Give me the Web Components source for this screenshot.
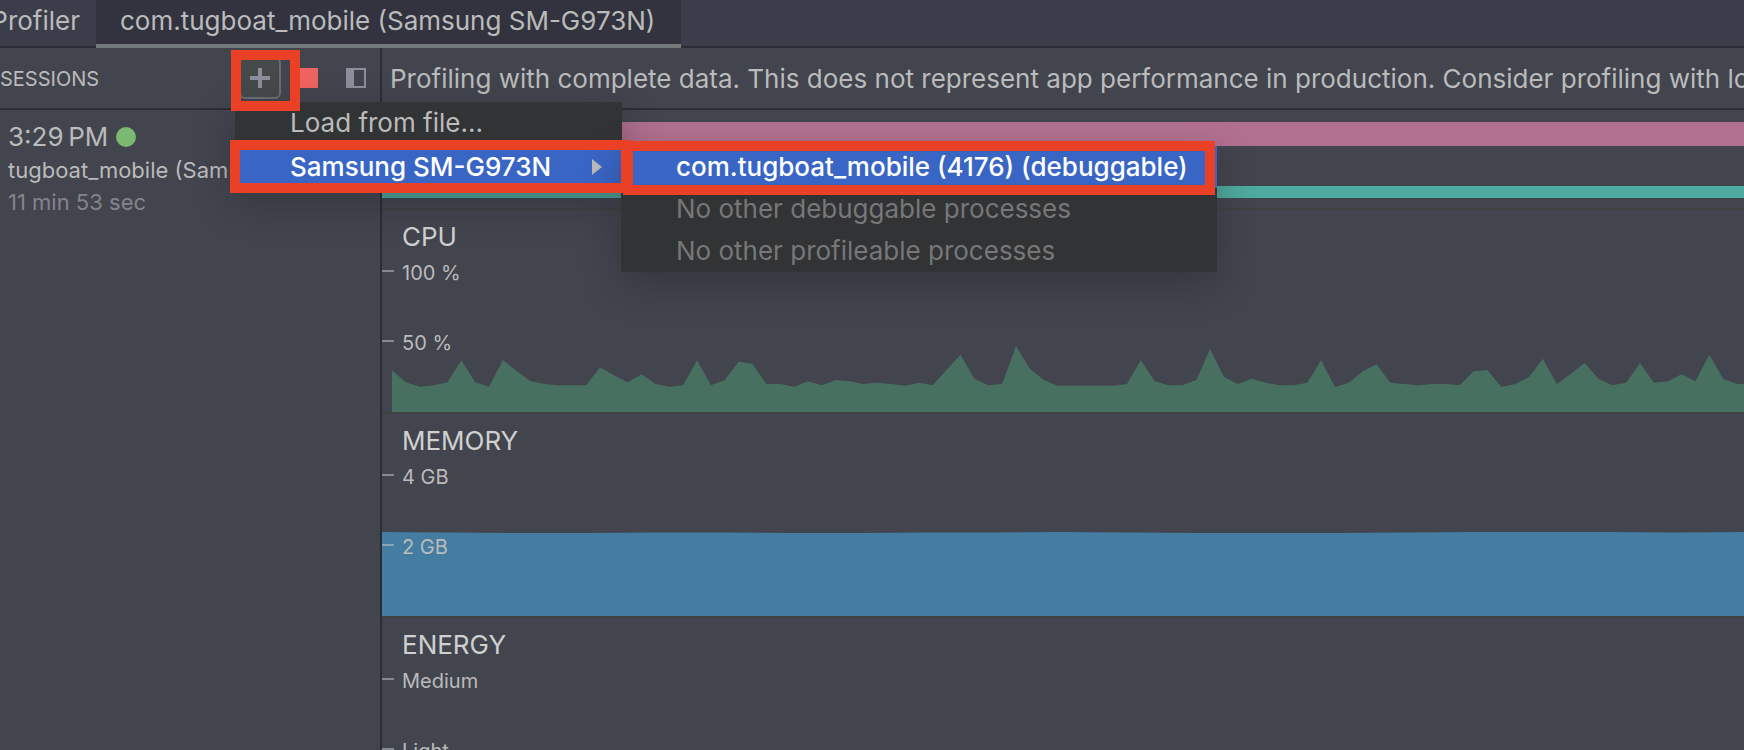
<!DOCTYPE html>
<html lang="en">
<head>
<meta charset="utf-8">
<title>Profiler</title>
<style>
  :root {
    --bg: #42444e;
    --bar: #3b3d4b;
    --line: #2a2c36;
    --text: #bbbbbb;
    --dim: #84858b;
    --menu: #313335;
    --select: #3965c5;
    --frame: #ea4025;
  }
  html, body {
    height: 100%;
    margin: 0;
    overflow: hidden;
    background: var(--bg);
    color: var(--text);
    font-family: Inter, Roboto, sans-serif;
    font-size: 26px;
    line-height: 32px;
  }
</style>
</head>
<body>
<profiler-app></profiler-app>

<script>
function attach(el, html) {
  const template = document.createElement('template');
  template.innerHTML = html;
  el.attachShadow({ mode: 'open' }).appendChild(template.content.cloneNode(true));
}

class ProfilerTabs extends HTMLElement {
  constructor() {
    super();
    attach(this, `
      <style>
        :host {
          display: flex;
          height: 46px;
          background: var(--bar);
          border-bottom: 2px solid var(--line);
        }
        button {
          box-sizing: border-box;
          border: 0;
          background: none;
          color: inherit;
          font: inherit;
          white-space: nowrap;
          height: 48px;
          padding: 0 26px 6px 24px;
        }
        .title {
          display: flex;
          justify-content: flex-end;
          align-items: center;
          width: 96px;
          padding-right: 16px;
        }
        .active {
          background:
            linear-gradient(#74797c, #74797c) bottom / 100% 4px no-repeat,
            #32333f;
        }
      </style>
      <button class="title">Profiler</button>
      <button class="active">com.tugboat_mobile (Samsung SM-G973N)</button>
    `);
  }
}

class SessionTools extends HTMLElement {
  constructor() {
    super();
    attach(this, `
      <style>
        :host {
          display: flex;
          align-items: center;
          gap: 8px;
          height: 60px;
          padding-right: 4px;
          border-bottom: 2px solid var(--line);
        }
        h2 {
          flex: 1;
          margin: 0;
          padding-top: 2px;
          font-size: 20px;
          font-weight: 400;
        }
        button {
          display: grid;
          place-items: center;
          box-sizing: border-box;
          width: 42px;
          height: 42px;
          margin: 0 -1px;
          padding: 0;
          border: 2px solid transparent;
          border-radius: 6px;
          background: none;
        }
        .open {
          background: #45494a;
          border-color: #6a6e73;
        }
        svg { display: block; }
      </style>
      <h2>SESSIONS</h2>
      <button class="open" aria-label="Start new session">
        <svg width="20" height="20"><path d="M8 0h4v8h8v4h-8v8H8v-8H0V8h8z" fill="#8c8f9b"/></svg>
      </button>
      <button aria-label="Stop session">
        <svg width="20" height="20"><path d="M0 0h20v20H0z" fill="#ee6460"/></svg>
      </button>
      <button aria-label="Collapse sessions">
        <svg width="20" height="20"><path d="M0 0h20v20H0zM8 2v16h10V2z" fill="#8c8f9b" fill-rule="evenodd"/></svg>
      </button>
    `);
  }
}

class SessionItem extends HTMLElement {
  constructor() {
    super();
    attach(this, `
      <style>
        :host {
          display: block;
          padding: 11px 8px;
          white-space: nowrap;
          overflow: hidden;
        }
        .time {
          display: flex;
          align-items: center;
          gap: 8px;
          margin-bottom: 1px;
        }
        .dot {
          width: 20px;
          height: 20px;
          border-radius: 50%;
          background: #7bb872;
        }
        .line { font-size: 22px; }
        .dim { color: var(--dim); }
      </style>
      <div class="time"><slot name="time"></slot><span class="dot"></span></div>
      <div class="line"><slot name="name"></slot></div>
      <div class="line dim"><slot name="length"></slot></div>
    `);
  }
}

class EventTrack extends HTMLElement {
  constructor() {
    super();
    attach(this, `
      <style>
        :host {
          display: flex;
          flex-direction: column;
          gap: 40px;
          padding: 12px 0 10px;
          border-bottom: 2px solid #414142;
        }
        .touch { height: 24px; background: #b1708f; }
        .activity { height: 12px; background: #4fab9f; }
      </style>
      <div class="touch"></div>
      <div class="activity"></div>
    `);
  }
}

/* One monitor row: title, axis labels (comma separated) and a chart in the slot. */
class MonitorStage extends HTMLElement {
  constructor() {
    super();
    const ticks = this.getAttribute('ticks').split(',');
    attach(this, `
      <style>
        :host {
          display: grid;
          height: 202px;
          border-bottom: 2px solid #414142;
          overflow: hidden;
        }
        .labels, .chart { grid-area: 1 / 1; min-width: 0; }
        .labels { z-index: 1; }
        .chart { display: grid; align-items: end; }
        h3 {
          margin: 0;
          padding: 11px 20px 8px;
          color: #d0d0d0;
          font-size: 26px;
          font-weight: 400;
        }
        .tick {
          display: flex;
          gap: 8px;
          height: 70px;
          font-size: 20px;
          line-height: 24px;
        }
        .tick::before {
          content: '';
          width: 12px;
          height: 2px;
          margin-top: 9px;
          background: rgba(200, 205, 210, .5);
        }
      </style>
      <div class="chart"><slot></slot></div>
      <div class="labels">
        <h3>${this.getAttribute('name')}</h3>
        ${ticks.map(t => `<div class="tick">${t}</div>`).join('')}
      </div>
    `);
  }
}

/* Filled area chart. Values are heights, "max" is the value at the top of the box. */
class AreaChart extends HTMLElement {
  constructor() {
    super();
    const values = this.getAttribute('values').trim().split(/\s+/).map(Number);
    const max = Number(this.getAttribute('max'));
    const span = Number(this.getAttribute('span'));
    const points = values.map((v, i) => `${i},${max - v}`).join(' ');
    attach(this, `
      <style>
        :host { display: block; }
        svg { display: block; width: 100%; height: 100%; }
      </style>
      <svg viewBox="0 0 ${span} ${max}" preserveAspectRatio="none">
        <polygon fill="${this.getAttribute('color')}"
          points="0,${max} ${points} ${values.length - 1},${max}"/>
      </svg>
    `);
  }
}

class PopupMenu extends HTMLElement {
  constructor() {
    super();
    attach(this, `
      <style>
        :host {
          display: flex;
          flex-direction: column;
          gap: 2px;
          box-sizing: border-box;
          background: var(--menu);
          border-radius: 2px;
          box-shadow: 0 12px 36px rgba(30, 32, 38, .35);
        }
      </style>
      <slot></slot>
    `);
  }
}

class PopupItem extends HTMLElement {
  constructor() {
    super();
    attach(this, `
      <style>
        :host { display: block; }
        button {
          display: flex;
          justify-content: space-between;
          align-items: center;
          width: 100%;
          height: 42px;
          padding: 0 20px 0 55px;
          border: 0;
          background: none;
          color: inherit;
          font: inherit;
          white-space: nowrap;
        }
        :host([selected]) button {
          background: var(--select);
          color: #fff;
          font-weight: 500;
        }
        button:disabled { color: #777; }
        svg { display: none; }
        :host([submenu]) svg { display: block; }
      </style>
      <button ${this.hasAttribute('disabled') ? 'disabled' : ''}>
        <slot></slot>
        <svg width="10" height="16"><path d="M0 0l10 8-10 8z" fill="#bbb"/></svg>
      </button>
    `);
  }
}

/* Red callout rectangle laid over the window. */
class CalloutFrame extends HTMLElement {
  constructor() {
    super();
    attach(this, `
      <style>
        :host {
          display: block;
          box-sizing: border-box;
          border: 10px solid var(--frame);
          pointer-events: none;
        }
      </style>
    `);
  }
}

class ProfilerApp extends HTMLElement {
  constructor() {
    super();
    attach(this, `
      <style>
        :host {
          display: flex;
          flex-direction: column;
          height: 100%;
          position: relative;
          overflow: hidden;
        }
        main {
          flex: 1;
          display: grid;
          grid-template-columns: 380px minmax(0, 1fr);
          min-height: 0;
        }
        aside { border-right: 2px solid var(--line); width: 380px; }
        .view { padding-left: 2px; min-width: 0; }
        .banner {
          height: 60px;
          line-height: 62px;
          margin: 0;
          padding-left: 8px;
          border-bottom: 2px solid var(--line);
          white-space: nowrap;
          overflow: hidden;
        }
        .cpu { height: 68px; margin-left: 10px; }
        .memory { height: 84px; }

        popup-menu, callout-frame { position: absolute; z-index: 2; }
        .sessions-menu { left: 235px; top: 102px; width: 387px; padding-bottom: 3px; }
        .process-menu { left: 621px; top: 146px; width: 596px; gap: 0; }
        .f1 { left: 231px; top: 50px; width: 69px; height: 61px; }
        .f2 { left: 230px; top: 140px; width: 401px; height: 53px; }
        .f3 { left: 623px; top: 141px; width: 592px; height: 54px; }
      </style>
      <profiler-tabs></profiler-tabs>
      <main>
        <aside>
          <session-tools></session-tools>
          <session-item>
            <span slot="time">3:29&#8239;PM</span>
            <span slot="name">tugboat_mobile (Sam</span>
            <span slot="length">11 min 53 sec</span>
          </session-item>
        </aside>
        <section class="view">
          <p class="banner">Profiling with complete data. This does not represent app performance in production. Consider profiling with low overhead</p>
          <event-track></event-track>
          <monitor-stage name="CPU" ticks="100 %,50 %">
            <area-chart class="cpu" color="#477060" max="204" span="97.5" values="
              125 89 76 80 89 155 89 76 156 122 92 84 80 80 80 134 110 89 113 84
              76 80 155 80 96 151 144 84 84 76 92 80 96 92 84 88 84 79 88 80
              127 172 100 80 84 198 130 96 79 79 79 79 79 84 156 92 80 80 96 189
              105 84 100 88 80 80 88 155 75 88 122 143 88 84 80 84 84 80 122 126
              75 84 105 160 84 114 147 100 80 88 147 88 92 113 92 172 100 84 86"></area-chart>
          </monitor-stage>
          <monitor-stage name="MEMORY" ticks="4 GB,2 GB">
            <area-chart class="memory" color="#447da1" max="84" span="20" values="
              84 83.5 83 83 83.5 83.5 83 83 83.5 83.5 84 83.5 83 83 83 83.5 84 84 84 83.5 84"></area-chart>
          </monitor-stage>
          <monitor-stage name="ENERGY" ticks="Medium,Light"></monitor-stage>
        </section>
      </main>

      <popup-menu class="sessions-menu">
        <popup-item>Load from file...</popup-item>
        <popup-item selected submenu>Samsung SM-G973N</popup-item>
      </popup-menu>
      <popup-menu class="process-menu">
        <popup-item selected>com.tugboat_mobile (4176) (debuggable)</popup-item>
        <popup-item disabled>No other debuggable processes</popup-item>
        <popup-item disabled>No other profileable processes</popup-item>
      </popup-menu>
      <callout-frame class="f1"></callout-frame>
      <callout-frame class="f2"></callout-frame>
      <callout-frame class="f3"></callout-frame>
    `);
  }
}

customElements.define('profiler-tabs', ProfilerTabs);
customElements.define('session-tools', SessionTools);
customElements.define('session-item', SessionItem);
customElements.define('event-track', EventTrack);
customElements.define('monitor-stage', MonitorStage);
customElements.define('area-chart', AreaChart);
customElements.define('popup-menu', PopupMenu);
customElements.define('popup-item', PopupItem);
customElements.define('callout-frame', CalloutFrame);
customElements.define('profiler-app', ProfilerApp);
</script>
</body>
</html>
